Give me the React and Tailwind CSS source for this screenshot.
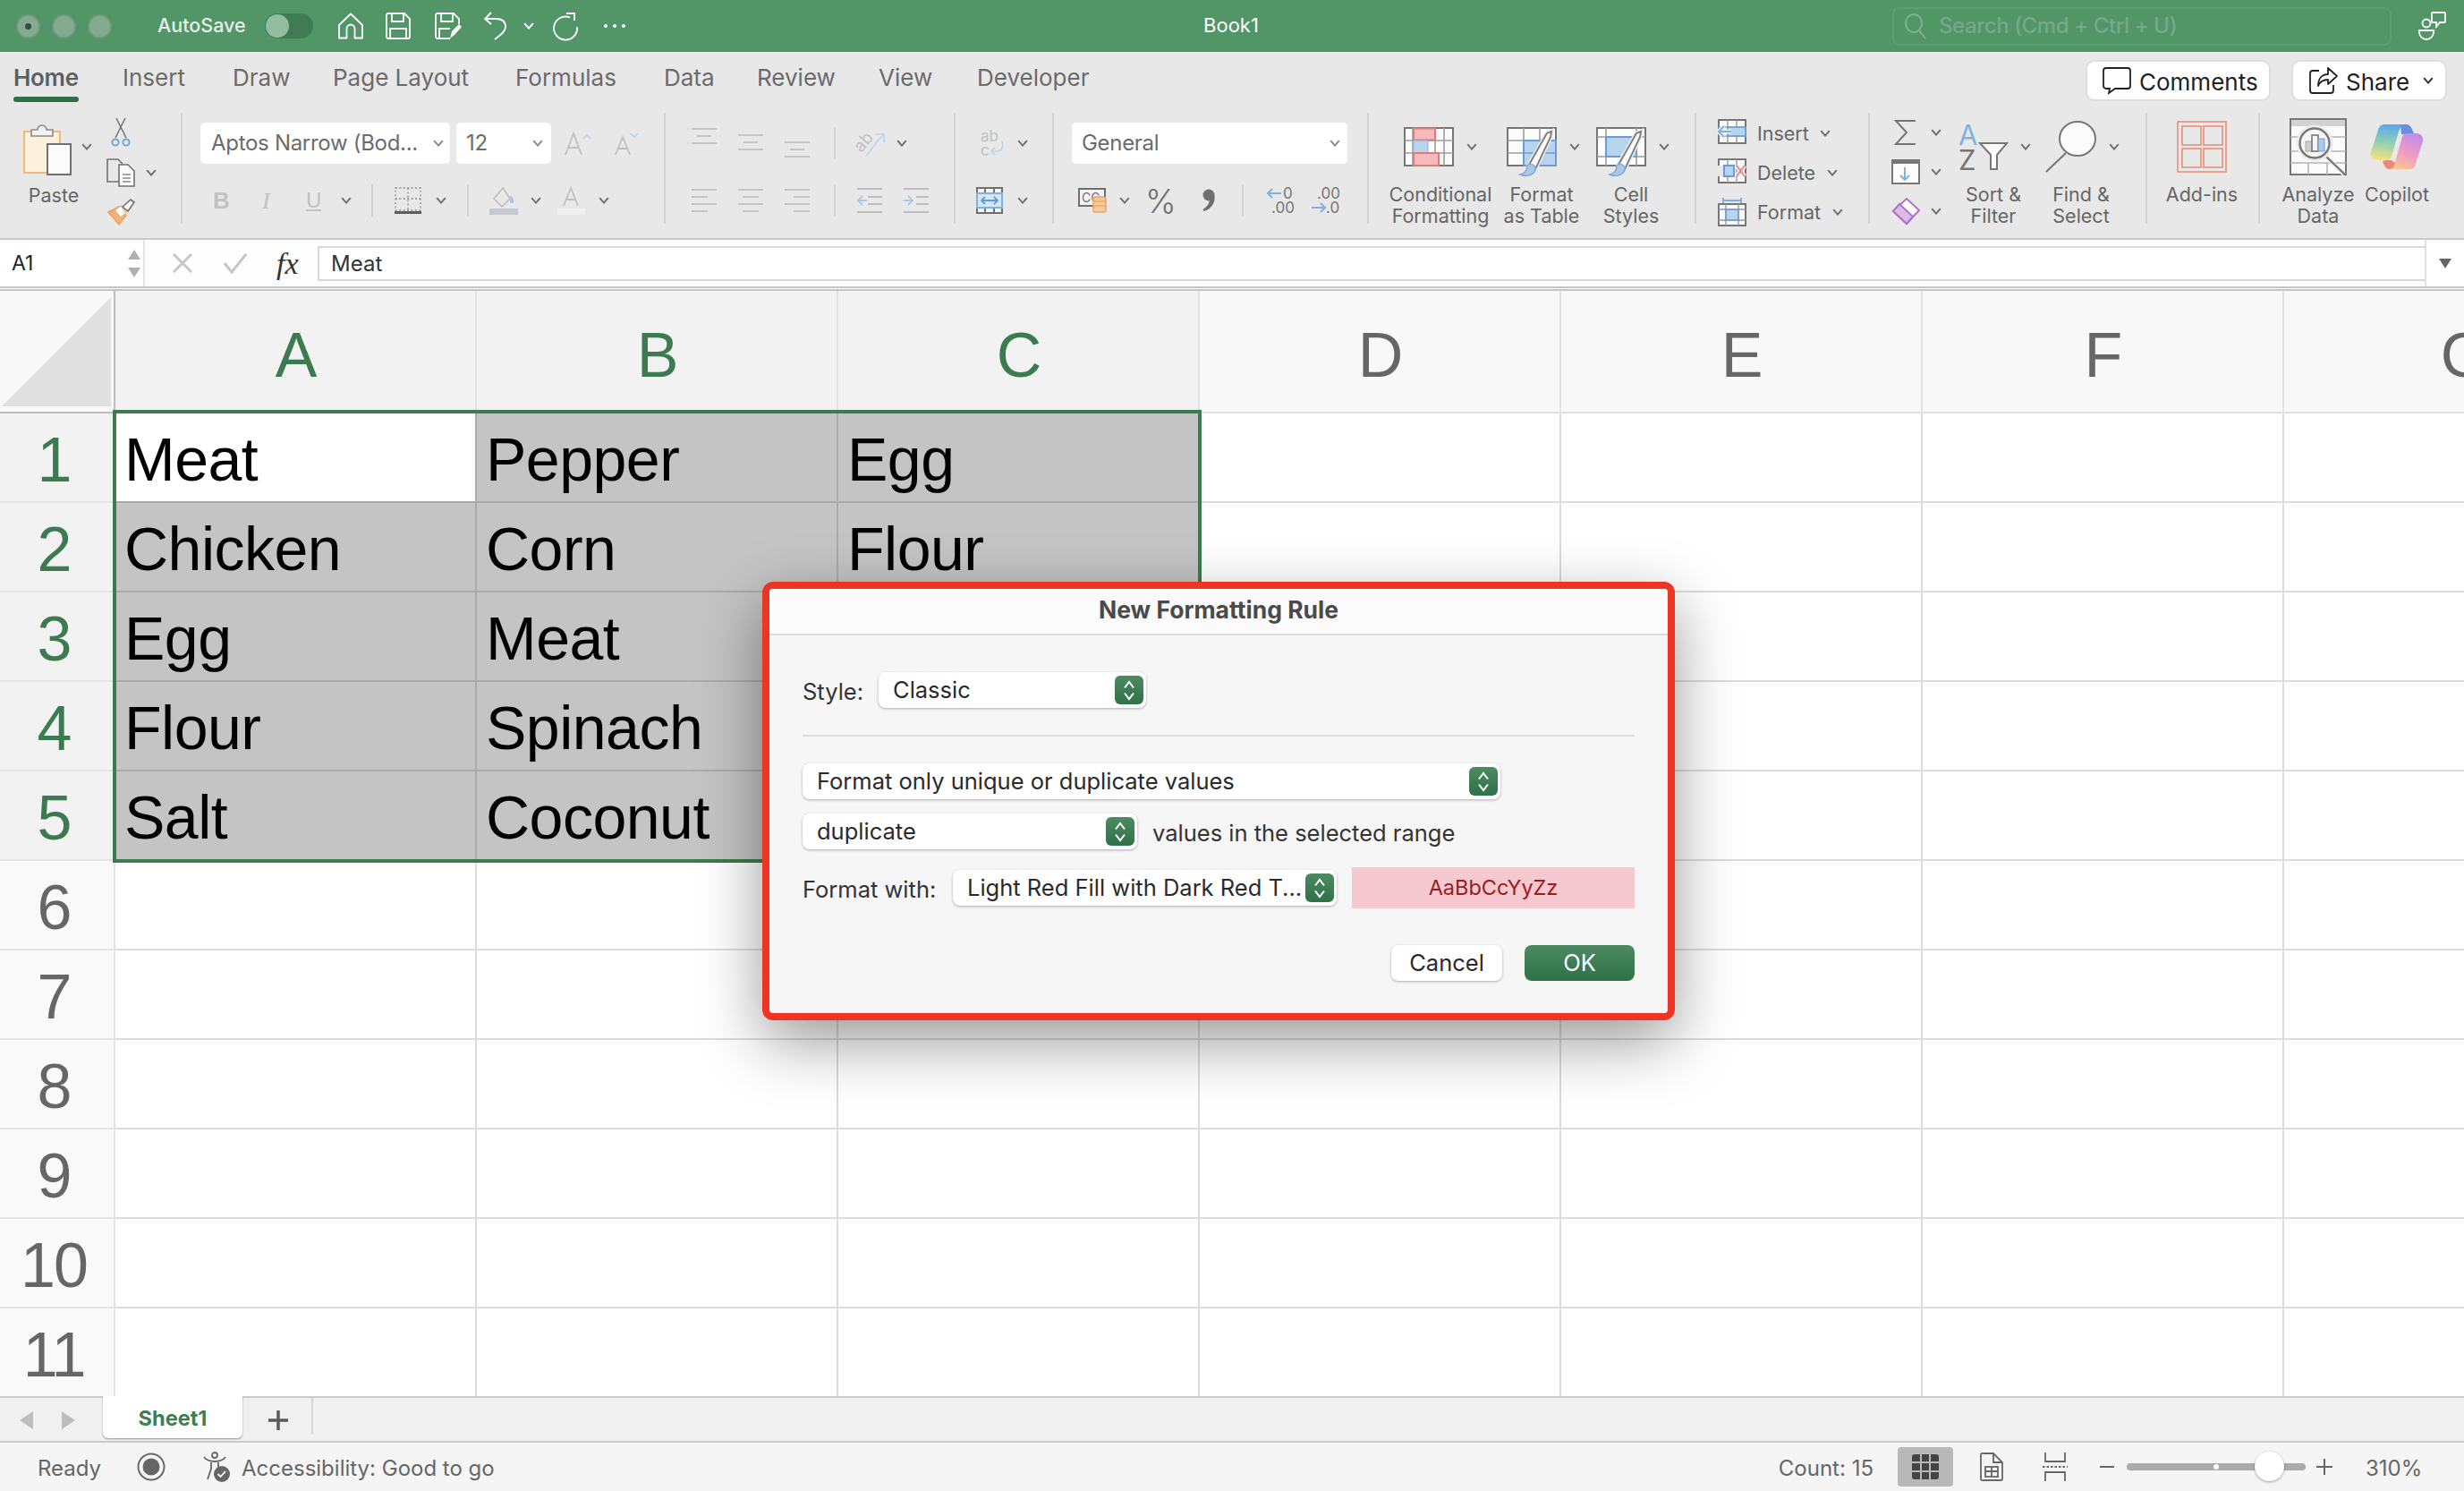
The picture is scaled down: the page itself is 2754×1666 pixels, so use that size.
import { Fragment } from "react";

const UI = "font-['Inter','Roboto',sans-serif]";
const SHEET = "font-['Liberation_Sans',Arial,sans-serif]";

const GRAY = "#767676";
const BLUE = "#7fb2e3";

const Chev = ({ className = "", color = "#707070" }) => (
  <svg width="12" height="8" viewBox="0 0 12 8" className={`shrink-0 ${className}`}>
    <path d="M1.2 1.2 6 6.6l4.8-5.4" fill="none" stroke={color} strokeWidth="2" />
  </svg>
);

const Box = ({ w, h, children, className = "" }) => (
  <svg width={w} height={h} viewBox={`0 0 ${w} ${h}`} className={`shrink-0 overflow-visible ${className}`}>
    {children}
  </svg>
);

/* ---------- title bar icons ---------- */
const HomeIcon = () => (
  <Box w={30} h={30}>
    <path d="M15 1.5 2 14v14.5h8.5V18a4.5 4.5 0 0 1 9 0v10.5H28V14z" fill="none" stroke="#fff" strokeWidth="1.8" strokeLinejoin="round" />
  </Box>
);
const SaveIcon = () => (
  <Box w={28} h={30}>
    <path d="M1 3a2 2 0 0 1 2-2h18l6 6v20a2 2 0 0 1-2 2H3a2 2 0 0 1-2-2z" fill="none" stroke="#fff" strokeWidth="1.8" />
    <path d="M7 1v9h13V1M5 29V18h18v11" fill="none" stroke="#fff" strokeWidth="1.8" />
  </Box>
);
const SaveAsIcon = () => (
  <Box w={30} h={32}>
    <path d="M17 30H3a2 2 0 0 1-2-2V4a2 2 0 0 1 2-2h18l6 6v6" fill="none" stroke="#fff" strokeWidth="1.8" />
    <path d="M7 2v9h13V2M5 30V19h12" fill="none" stroke="#fff" strokeWidth="1.8" />
    <path d="m17 30 2-8 8-8 3 3-8 9z" fill="#fff" />
  </Box>
);
const UndoIcon = () => (
  <Box w={28} h={32}>
    <path d="M9 1 2 8l7 6M2 8h12c7 0 11 3 11 9 0 5-5 9-12 14" fill="none" stroke="#fff" strokeWidth="1.8" />
  </Box>
);
const RedoIcon = () => (
  <Box w={30} h={30}>
    <path d="M20 5.5A13 13 0 1 0 28 16" fill="none" stroke="#fff" strokeWidth="1.8" />
    <path d="M16 1h9v8" fill="none" stroke="#fff" strokeWidth="1.8" />
  </Box>
);
const PeopleIcon = () => (
  <Box w={32} h={32}>
    <circle cx="10" cy="13" r="4.5" fill="none" stroke="#fff" strokeWidth="1.8" />
    <path d="M2 21h16v2a8 8 0 0 1-16 0z" fill="none" stroke="#fff" strokeWidth="1.8" />
    <path d="M17 1h13a1 1 0 0 1 1 1v9a1 1 0 0 1-1 1h-5l-4 5v-5h-4a1 1 0 0 1-1-1V2a1 1 0 0 1 1-1z" fill="none" stroke="#fff" strokeWidth="1.8" />
  </Box>
);

/* ---------- ribbon icons ---------- */
const PasteIcon = () => (
  <Box w={54} h={59}>
    <rect x="1" y="10" width="40" height="46" fill="#fdf0dc" stroke="#efb77c" strokeWidth="2" />
    <path d="M9 15V8h7a5 5 0 0 1 10 0h7v7z" fill="#f3f3f3" stroke="#8a8a8a" strokeWidth="1.6" />
    <rect x="27" y="24" width="26" height="34" fill="#fbfbfb" stroke="#707070" strokeWidth="2" />
  </Box>
);
const ScissorsIcon = () => (
  <Box w={22} h={32}>
    <path d="M5 22 16 0M17 22 6 0" stroke="#6f6f6f" strokeWidth="1.5" />
    <circle cx="5" cy="27" r="3.6" fill="none" stroke="#6fa5dc" strokeWidth="2" />
    <circle cx="17" cy="27" r="3.6" fill="none" stroke="#6fa5dc" strokeWidth="2" />
  </Box>
);
const CopyIcon = () => (
  <Box w={32} h={32}>
    <path d="M16 26H1V1h12l5 5" fill="none" stroke="#707070" strokeWidth="1.6" />
    <path d="M14 7h10l7 7v17H14z" fill="#fbfbfb" stroke="#707070" strokeWidth="1.6" />
    <path d="M18 18h9M18 22h9M18 26h9" stroke="#8a8a8a" strokeWidth="1.4" />
  </Box>
);
const PainterIcon = () => (
  <Box w={32} h={30}>
    <path d="m1 15 12-6 8 10-8 10z" fill="#f3b27a" stroke="#ef9f5e" strokeWidth="1.4" />
    <path d="m8 13 7-5 6 8-6 5z" fill="#fff" stroke="#e9a871" strokeWidth="1.2" />
    <path d="m17 9 9-8 4 3-7 10z" fill="#fafafa" stroke="#707070" strokeWidth="1.6" />
  </Box>
);
const GrowA = ({ up }) => (
  <Box w={up ? 30 : 26} h={28}>
    <path d={up ? "M1 27 10 3l9 24M5 19h10" : "M1 27 9 7l8 20M4 20h10"} fill="none" stroke="#c0c0c0" strokeWidth="1.8" />
    <path d={up ? "m21 9 4-4 4 4" : "m18 3 4 4 4-4"} fill="none" stroke="#bcd3ea" strokeWidth="1.6" />
  </Box>
);
const BorderIcon = () => (
  <Box w={30} h={30}>
    <path d="M1 1h28v25H1zM15 1v25M1 13h28" fill="none" stroke="#8a8a8a" strokeWidth="1.3" strokeDasharray="2 2.4" />
    <rect x="0" y="27" width="30" height="3" fill="#5d5d5d" />
  </Box>
);
const FillIcon = () => (
  <Box w={32} h={32}>
    <path d="m5 14 10-12 8 12-9 9z" fill="none" stroke="#bdbdbd" strokeWidth="1.6" />
    <path d="M24 10c2 3 3 5 3 7a2 2 0 0 1-4 0z" fill="#a8bfd8" />
    <rect x="0" y="25" width="32" height="7" fill="#c2c9d3" />
  </Box>
);
const ColorA = () => (
  <Box w={31} h={32}>
    <path d="M7 22 15 2l8 20M10 15h10" fill="none" stroke="#c0c0c0" strokeWidth="1.8" />
    <rect x="0" y="25" width="31" height="7" fill="#f0f0f0" />
  </Box>
);
const AlignV = ({ y }) => (
  <Box w={28} h={36}>
    <path d={`M0 ${y + 1}h28M6 ${y + 9}h16M0 ${y + 17}h28`} stroke="#c4c4c4" strokeWidth="2" />
  </Box>
);
const AlignH = ({ kind }) => {
  const d = {
    l: "M0 2h28M0 10h18M0 18h28M0 26h18",
    c: "M0 2h28M5 10h18M0 18h28M5 26h18",
    r: "M0 2h28M10 10h18M0 18h28M10 26h18",
  }[kind];
  return (
    <Box w={28} h={28}>
      <path d={d} stroke="#c4c4c4" strokeWidth="2" />
    </Box>
  );
};
const OrientIcon = () => (
  <Box w={34} h={30}>
    <text x="0" y="20" transform="rotate(-50 10 16)" fontSize="19" fill="#c0c0c0" fontFamily="Inter">ab</text>
    <path d="M12 29 32 4M23 5h9v9" fill="none" stroke="#bcd3ea" strokeWidth="1.6" />
  </Box>
);
const Indent = ({ dir }) => (
  <Box w={28} h={28}>
    <path d={dir === "l" ? "M0 1h28M12 10h16M12 18h16M0 27h28" : "M0 1h28M14 10h14M14 18h14M0 27h28"} stroke="#bcbcbc" strokeWidth="2" />
    <path d={dir === "l" ? "M11 14H1M6 9l-5 5 5 5" : "M0 14h10M5 9l5 5-5 5"} fill="none" stroke="#a9c8e6" strokeWidth="1.8" />
  </Box>
);
const WrapIcon = () => (
  <Box w={28} h={30}>
    <text x="0" y="13" fontSize="17" fill="#c0c0c0" fontFamily="Inter">ab</text>
    <text x="0" y="29" fontSize="17" fill="#c0c0c0" fontFamily="Inter">c</text>
    <path d="M24 13c2 6 0 10-5 11h-7M16 20l-4 4 4 4" fill="none" stroke="#bcd3ea" strokeWidth="1.6" />
  </Box>
);
const MergeIcon = () => (
  <Box w={30} h={30}>
    <rect x="1" y="1" width="28" height="28" fill="#f7f7f7" stroke="#6f6f6f" strokeWidth="2" />
    <path d="M10 1v6M20 1v6M10 23v6M20 23v6" stroke="#6f6f6f" strokeWidth="2" />
    <rect x="1" y="7" width="28" height="16" fill="#d6e6f6" stroke="#7fb2e3" strokeWidth="2" />
    <path d="M6 15h18M10 11l-4 4 4 4M20 11l4 4-4 4" fill="none" stroke="#5f9bd8" strokeWidth="1.8" />
  </Box>
);
const CurrencyIcon = () => (
  <Box w={32} h={28}>
    <rect x="1" y="1" width="29" height="19" fill="#f4f4f4" stroke="#6f6f6f" strokeWidth="2" />
    <text x="4" y="16" fontSize="14" fill="#6f6f6f" fontFamily="Inter">CC</text>
    <rect x="17" y="10" width="14" height="6" rx="3" fill="#f8c99b" stroke="#eba766" strokeWidth="1.5" />
    <rect x="17" y="15" width="14" height="6" fill="#f8c99b" stroke="#eba766" strokeWidth="1.5" />
    <rect x="17" y="20" width="14" height="7" rx="2" fill="#f8c99b" stroke="#eba766" strokeWidth="1.5" />
  </Box>
);
const CommaIcon = () => (
  <Box w={17} h={26}>
    <circle cx="10" cy="7" r="6.5" fill="#6f6f6f" />
    <path d="M11 8h5.500c1 8-4 15-12 17l-1-2c5-3 7-7 7.500-11z" fill="#6f6f6f" />
  </Box>
);
const DecIcon = ({ more }) => (
  <Box w={31} h={32}>
    {more ? (
      <>
        <path d="M17 8H2M7 3 2 8l5 5" fill="none" stroke={BLUE} strokeWidth="2" />
        <text x="19" y="14" fontSize="17" fill={GRAY} fontFamily="Inter">0</text>
        <text x="6" y="30" fontSize="17" fill={GRAY} fontFamily="Inter">.00</text>
      </>
    ) : (
      <>
        <text x="6" y="14" fontSize="17" fill={GRAY} fontFamily="Inter">.00</text>
        <path d="M0 24h15M10 19l5 5-5 5" fill="none" stroke={BLUE} strokeWidth="2" />
        <text x="16" y="30" fontSize="17" fill={GRAY} fontFamily="Inter">.0</text>
      </>
    )}
  </Box>
);
const Brush = () => (
  <g>
    <path d="M25 42 45 7l5-2-1 6-17 36z" fill="#fff" stroke="#e8e8e8" strokeWidth="5" />
    <path d="M25 42 45 7l5-2-1 6-17 36z" fill="#fafafa" stroke="#7c7c7c" strokeWidth="1.8" />
    <path d="M15 53c5-1 8-4 8-10 2-3 7-2 9 2 1 7-8 12-17 8z" fill="#a9c8ea" stroke="#7fa8d8" strokeWidth="1.4" />
  </g>
);
const CondIcon = () => (
  <Box w={56} h={44}>
    <rect x="1" y="1" width="54" height="42" fill="#fcfcfc" stroke={GRAY} strokeWidth="2" />
    <path d="M10 1v42M35 1v42M45 1v42M1 15h54M1 29h54" stroke="#9c9c9c" strokeWidth="1.6" />
    <rect x="11" y="1.5" width="24" height="13" fill="#f5babd" stroke="#dd7c75" strokeWidth="2" />
    <rect x="11" y="15" width="16" height="14" fill="#b7d4ef" stroke="#8db3dd" strokeWidth="1" />
    <rect x="11" y="29" width="28" height="14" fill="#f5babd" stroke="#dd7c75" strokeWidth="2" />
  </Box>
);
const TableIcon = () => (
  <Box w={60} h={55}>
    <rect x="1" y="1" width="54" height="42" fill="#fcfcfc" stroke={GRAY} strokeWidth="2" />
    <path d="M19 1v15M37 1v15M1 15h18M1 29h18" stroke="#9c9c9c" strokeWidth="1.6" />
    <rect x="19" y="15" width="36" height="28" fill="#b7d4ef" stroke="#6f9bd1" strokeWidth="2" />
    <path d="M37 15v28M19 29h36" stroke="#6f9bd1" strokeWidth="1.6" />
    <Brush />
  </Box>
);
const StylesIcon = () => (
  <Box w={60} h={55}>
    <rect x="1" y="1" width="54" height="42" fill="#fcfcfc" stroke={GRAY} strokeWidth="2" />
    <path d="M11 1v42M45 1v42M1 11h54M1 33h54" stroke="#9c9c9c" strokeWidth="1.6" />
    <rect x="11" y="11" width="34" height="22" fill="#b7d4ef" stroke="#6f9bd1" strokeWidth="2" />
    <Brush />
  </Box>
);
const CellIcon = ({ kind }) => (
  <Box w={32} h={32}>
    {kind === "insert" && (
      <>
        <rect x="1" y="1" width="30" height="26" fill="#fafafa" stroke={GRAY} strokeWidth="2" />
        <path d="M11 1v26M21 1v26M1 9h30M1 19h30" stroke="#9a9a9a" strokeWidth="1.4" />
        <rect x="11" y="9" width="20" height="10" fill="#b7d4ef" stroke="#6f9bd1" strokeWidth="1.6" />
        <path d="M15 14H1M7 8l-6 6 6 6" fill="none" stroke="#eee" strokeWidth="5" />
        <path d="M15 14H1M7 8l-6 6 6 6" fill="none" stroke={BLUE} strokeWidth="2" />
      </>
    )}
    {kind === "delete" && (
      <>
        <rect x="1" y="1" width="30" height="26" fill="#fafafa" stroke={GRAY} strokeWidth="2" />
        <path d="M11 1v26M21 1v26" stroke="#9a9a9a" strokeWidth="1.4" />
        <rect x="0" y="8" width="7" height="12" fill="#e8e8e8" />
        <rect x="7" y="8" width="11" height="12" fill="#b7d4ef" stroke="#6f9bd1" strokeWidth="2" />
        <path d="m21 8 9 12M30 8l-9 12" stroke="#eee" strokeWidth="5" />
        <path d="m21 8 9 12M30 8l-9 12" stroke="#ea8a84" strokeWidth="2" />
      </>
    )}
    {kind === "format" && (
      <>
        <path d="M6 3h20M6 0v6M26 0v6" stroke={BLUE} strokeWidth="2" />
        <rect x="1" y="7" width="30" height="24" fill="#fafafa" stroke={GRAY} strokeWidth="2" />
        <path d="M9 7v24M23 7v24M1 13h30M1 25h30" stroke="#9a9a9a" strokeWidth="1.4" />
        <rect x="9" y="13" width="14" height="12" fill="#b7d4ef" stroke="#6f9bd1" strokeWidth="1.6" />
      </>
    )}
  </Box>
);
const SigmaIcon = () => (
  <Box w={32} h={28}>
    <path d="M27 1H5l12 13L5 27h22" fill="none" stroke={GRAY} strokeWidth="2" />
  </Box>
);
const FillDown = () => (
  <Box w={32} h={28}>
    <rect x="1" y="1" width="30" height="26" fill="#fcfcfc" stroke={GRAY} strokeWidth="2" />
    <rect x="1" y="1" width="30" height="4" fill={GRAY} />
    <path d="M15 9v14M10 18l5 5 5-5" fill="none" stroke={BLUE} strokeWidth="2" />
  </Box>
);
const EraserIcon = () => (
  <Box w={32} h={30}>
    <path d="m17 1 14 13-14 15L2 15z" fill="#fff" stroke="#ad73c4" strokeWidth="2" />
    <path d="m9 7-7 8 15 14 7-8z" fill="#dcb9e6" stroke="#ad73c4" strokeWidth="2" />
  </Box>
);
const SortIcon = () => (
  <Box w={55} h={54}>
    <text x="0" y="25" fontSize="31" fill={BLUE} fontFamily="Inter">A</text>
    <text x="0" y="53" fontSize="31" fill={GRAY} fontFamily="Inter">Z</text>
    <path d="M24 23h30L43 36v16h-7V36z" fill="#fbfbfb" stroke={GRAY} strokeWidth="2" />
  </Box>
);
const FindIcon = () => (
  <Box w={58} h={58}>
    <ellipse cx="36" cy="20" rx="20" ry="19" fill="#fbfbfb" stroke={GRAY} strokeWidth="2" />
    <path d="M23 36 1 57" stroke={GRAY} strokeWidth="2" />
  </Box>
);
const AddinsIcon = () => (
  <Box w={56} h={58}>
    <rect x="1" y="1" width="54" height="56" fill="none" stroke="#e58f78" strokeWidth="1.6" />
    <rect x="6" y="6" width="21" height="21" fill="none" stroke="#e58f78" strokeWidth="1.6" />
    <rect x="30" y="6" width="21" height="21" fill="none" stroke="#e58f78" strokeWidth="1.6" />
    <rect x="6" y="31" width="21" height="21" fill="none" stroke="#e58f78" strokeWidth="1.6" />
    <rect x="30" y="31" width="21" height="21" fill="none" stroke="#e58f78" strokeWidth="1.6" />
  </Box>
);
const AnalyzeIcon = () => (
  <Box w={64} h={64}>
    <rect x="1" y="1" width="62" height="62" fill="#fbfbfb" stroke={GRAY} strokeWidth="2" />
    <rect x="2" y="2" width="60" height="7" fill="#d2d2d2" />
    <path d="M1 21h62M1 37h62M1 50h62M21 50v13M42 50v13" stroke="#b5b5b5" strokeWidth="1.6" />
    <path d="m38 40 23 23" stroke="#eee" strokeWidth="5" />
    <path d="m40 42 22 21" stroke={GRAY} strokeWidth="2.4" />
    <circle cx="28" cy="28" r="18" fill="#f6f6f6" stroke="#ececec" strokeWidth="5" />
    <circle cx="28" cy="28" r="16.5" fill="none" stroke={GRAY} strokeWidth="2.4" />
    <rect x="18" y="26" width="8" height="11" fill="#cfcfcf" stroke="#a5a5a5" />
    <rect x="25" y="19" width="7" height="18" fill="#f3f3f3" stroke={GRAY} strokeWidth="1.6" />
    <rect x="32" y="23" width="7" height="14" fill="#a9cbec" stroke="#6f9bd1" />
  </Box>
);
const CopilotIcon = () => (
  <Box w={60} h={52}>
    <defs>
      <linearGradient id="cpa" x1="0.4" y1="0" x2="0.3" y2="1">
        <stop offset="0" stopColor="#5aa9ef" />
        <stop offset="0.5" stopColor="#8fd0b0" />
        <stop offset="1" stopColor="#f8e27e" />
      </linearGradient>
      <linearGradient id="cpb" x1="0.7" y1="0" x2="0.3" y2="1">
        <stop offset="0" stopColor="#c28de8" />
        <stop offset="0.55" stopColor="#ef9cc2" />
        <stop offset="1" stopColor="#fbc58f" />
      </linearGradient>
    </defs>
    <path d="M16 1h24c-3 0-6 3-8 8l-8 28c-1 3-3 4-6 4H8c-5 0-8-4-7-9l8-25c1-4 4-6 7-6z" fill="url(#cpa)" />
    <path d="M34 1h6c4 0 6 2 8 8l2 3H35z" fill="#6a8fe0" />
    <path d="M44 51H20c3 0 6-3 8-8l8-28c1-3 3-4 6-4h10c5 0 8 4 7 9l-8 25c-1 4-4 6-7 6z" fill="url(#cpb)" />
    <path d="M18 41h6l4 3c-1 4-3 7-7 7-3 0-5-3-7-9z" fill="#ea8b7e" />
  </Box>
);
const CommentIcon = () => (
  <Box w={32} h={30}>
    <path d="M4 1h24a3 3 0 0 1 3 3v17a3 3 0 0 1-3 3H14l-7 5 1-5H4a3 3 0 0 1-3-3V4a3 3 0 0 1 3-3z" fill="none" stroke="#222" strokeWidth="1.8" />
  </Box>
);
const ShareIcon = () => (
  <Box w={32} h={30}>
    <path d="M11 4H4a3 3 0 0 0-3 3v19a3 3 0 0 0 3 3h20a3 3 0 0 0 3-3v-6" fill="none" stroke="#222" strokeWidth="1.8" />
    <path d="M21 1l10 9-10 9v-5c-6 0-9 2-11 7 0-8 4-13 11-13z" fill="none" stroke="#222" strokeWidth="1.8" strokeLinejoin="round" />
  </Box>
);

const Sep = ({ className = "" }) => <div className={`w-[2px] h-[124px] bg-[#d2d2d2] shrink-0 ${className}`} />;
const MiniSep = ({ className = "" }) => <div className={`w-[2px] h-[36px] bg-[#d2d2d2] shrink-0 ${className}`} />;
const Row1 = ({ children }) => <div className="flex items-center h-[46px]">{children}</div>;
const Row2 = ({ children }) => <div className="flex items-center h-[36px] mt-[23px]">{children}</div>;

const Dropdown = ({ text, className, chevClass }) => (
  <div className={`h-[46px] bg-white rounded-[5px] flex items-center justify-between text-[24px] text-[#6b6b6b] tracking-[-0.3px] ${className}`}>
    <span className="whitespace-nowrap">{text}</span>
    <Chev className={chevClass} color="#8a8a8a" />
  </div>
);

const BigItem = ({ className, iconClass = "", icon, chevClass, label }) => (
  <div className={`shrink-0 flex flex-col ${className}`}>
    <div className={`h-[76px] flex items-center ${iconClass}`}>
      {icon}
      {chevClass && <Chev className={chevClass} />}
    </div>
    <div className="mt-[3px] text-center text-[21.5px] leading-[24px] text-[#666] whitespace-nowrap">{label}</div>
  </div>
);

const CellRow = ({ kind, label, textClass }) => (
  <div className="h-[44px] flex items-center">
    <div className="ml-[24px]">
      <CellIcon kind={kind} />
    </div>
    <span className={`ml-[12px] text-[21.5px] text-[#666] ${textClass}`}>{label}</span>
    <Chev />
  </div>
);

const TABS = [
  ["Home", "w-[122px]"],
  ["Insert", "w-[123px]"],
  ["Draw", "w-[112px]"],
  ["Page Layout", "w-[204px]"],
  ["Formulas", "w-[166px]"],
  ["Data", "w-[104px]"],
  ["Review", "w-[136px]"],
  ["View", "w-[110px]"],
  ["Developer", "w-[150px]"],
];

const TitleBar = () => (
  <div className="h-[58px] bg-[#529567] flex items-center text-white">
    <div className="ml-[18px] w-[27px] h-[27px] rounded-full bg-[#84ab90] border-2 border-[#6f9a7e] flex items-center justify-center">
      <div className="w-[7px] h-[7px] rounded-full bg-[#2f4f3a]" />
    </div>
    <div className="ml-[13px] w-[27px] h-[27px] rounded-full bg-[#84ab90] border-2 border-[#6f9a7e]" />
    <div className="ml-[13px] w-[27px] h-[27px] rounded-full bg-[#84ab90] border-2 border-[#6f9a7e]" />
    <span className="ml-[51px] mb-[2px] w-[120px] text-[21.5px] text-[#e6f0e9] font-medium">AutoSave</span>
    <div className="w-[54px] h-[28px] rounded-full bg-[#3f7c54] flex items-center pl-[1px]">
      <div className="w-[26px] h-[26px] rounded-full bg-[#93bd9f]" />
    </div>
    <div className="ml-[27px]"><HomeIcon /></div>
    <div className="ml-[24px]"><SaveIcon /></div>
    <div className="ml-[27px]"><SaveAsIcon /></div>
    <div className="ml-[24px]"><UndoIcon /></div>
    <Chev className="ml-[17px]" color="#fff" />
    <div className="ml-[20px]"><RedoIcon /></div>
    <div className="ml-[28px] flex gap-[6px]">
      <div className="w-[4px] h-[4px] rounded-full bg-white" />
      <div className="w-[4px] h-[4px] rounded-full bg-white" />
      <div className="w-[4px] h-[4px] rounded-full bg-white" />
    </div>
    <div className="ml-[622px] mb-[2px] w-[110px] text-center text-[22px]">Book1</div>
    <div className="ml-[684px] w-[558px] h-[43px] rounded-[8px] border-2 border-[#5c9d73] flex items-center pl-[11px]">
      <svg width="26" height="30" viewBox="0 0 26 30" className="shrink-0">
        <ellipse cx="11" cy="12" rx="9" ry="10" fill="none" stroke="#7db08f" strokeWidth="2" />
        <path d="m17 20 7 9" stroke="#7db08f" strokeWidth="2" />
      </svg>
      <span className="ml-[13px] mb-[1px] text-[24px] font-medium text-[#74aa87] tracking-[-0.4px] whitespace-nowrap">Search (Cmd + Ctrl + U)</span>
    </div>
    <div className="ml-[29px]"><PeopleIcon /></div>
  </div>
);

const Ribbon = () => (
  <div className="h-[208px] bg-[#e8e8e8] border-b-0">
    <div className="h-[68px] flex">
      <div className="flex pl-[15px] pt-[14px]">
        {TABS.map(([name, w], i) => (
          <div key={name} className={`${w} text-[26px] leading-[30px] whitespace-nowrap ${i === 0 ? "text-[#5e5e5e] font-semibold tracking-[-0.3px]" : "text-[#6b6b6b]"}`}>
            <span className="inline-block">
              {name}
              {i === 0 && <div className="mt-[6px] h-[6px] rounded-full bg-[#2f6e46]" />}
            </span>
          </div>
        ))}
      </div>
      <div className="ml-auto mt-[9px] mr-[19px] flex gap-[23px]">
        <div className="w-[207px] h-[46px] bg-white rounded-[10px] border-2 border-[#dedede] flex items-center pl-[17px] text-[26px] text-[#222]">
          <CommentIcon />
          <span className="ml-[9px] mt-[2px]">Comments</span>
        </div>
        <div className="w-[174px] h-[46px] bg-white rounded-[10px] border-2 border-[#dedede] flex items-center pl-[18px] text-[26px] text-[#222]">
          <ShareIcon />
          <span className="ml-[9px] mt-[2px]">Share</span>
          <Chev className="ml-[15px]" color="#333" />
        </div>
      </div>
    </div>

    <div className="h-[140px] flex">
      {/* clipboard */}
      <div className="w-[202px] shrink-0 flex">
        <div className="ml-[26px] w-[71px] shrink-0 flex flex-col">
          <div className="mt-[11px] flex items-center">
            <PasteIcon />
            <Chev className="ml-[11px] mb-[6px]" />
          </div>
          <div className="w-[68px] mt-[10px] text-center text-[21.5px] leading-[24px] text-[#666]">Paste</div>
        </div>
        <div className="ml-[22px] flex flex-col">
          <div className="mt-[6px] ml-[5px]"><ScissorsIcon /></div>
          <div className="mt-[13px] flex items-center">
            <CopyIcon />
            <Chev className="ml-[12px]" />
          </div>
          <div className="mt-[13px] ml-[1px]"><PainterIcon /></div>
        </div>
      </div>
      <Sep />

      {/* font */}
      <div className="w-[538px] shrink-0 pt-[11px]">
        <Row1>
          <Dropdown text="Aptos Narrow (Bod..." className="ml-[20px] w-[279px] pl-[12px] pr-[7px] shrink-0" />
          <Dropdown text="12" className="ml-[7px] w-[106px] pl-[11px] pr-[9px] shrink-0" />
          <div className="ml-[15px]"><GrowA up /></div>
          <div className="ml-[26px]"><GrowA /></div>
        </Row1>
        <Row2>
          <span className={`ml-[34px] w-[17px] text-[26px] font-bold text-[#c2c2c2] ${SHEET}`}>B</span>
          <span className="ml-[38px] w-[12px] text-[26px] italic text-[#c2c2c2] font-['Liberation_Serif',serif]">I</span>
          <span className={`ml-[37px] w-[16px] text-[24px] underline text-[#c2c2c2] ${SHEET}`}>U</span>
          <Chev className="ml-[23px]" />
          <MiniSep className="ml-[22px]" />
          <div className="ml-[24px]"><BorderIcon /></div>
          <Chev className="ml-[16px]" />
          <MiniSep className="ml-[23px]" />
          <div className="ml-[23px]"><FillIcon /></div>
          <Chev className="ml-[14px]" />
          <div className="ml-[18px]"><ColorA /></div>
          <Chev className="ml-[15px]" />
        </Row2>
      </div>
      <Sep />

      {/* alignment */}
      <div className="w-[322px] shrink-0 pt-[11px]">
        <Row1>
          <div className="ml-[29px]"><AlignV y={1} /></div>
          <div className="ml-[24px]"><AlignV y={8} /></div>
          <div className="ml-[24px]"><AlignV y={16} /></div>
          <MiniSep className="ml-[27px]" />
          <div className="ml-[22px]"><OrientIcon /></div>
          <Chev className="ml-[12px]" />
        </Row1>
        <Row2>
          <div className="ml-[29px]"><AlignH kind="l" /></div>
          <div className="ml-[24px]"><AlignH kind="c" /></div>
          <div className="ml-[24px]"><AlignH kind="r" /></div>
          <MiniSep className="ml-[27px]" />
          <div className="ml-[24px]"><Indent dir="l" /></div>
          <div className="ml-[24px]"><Indent dir="r" /></div>
        </Row2>
      </div>
      <Sep />

      {/* wrap + merge */}
      <div className="w-[108px] shrink-0 pt-[11px]">
        <Row1>
          <div className="ml-[28px]"><WrapIcon /></div>
          <Chev className="ml-[13px]" />
        </Row1>
        <Row2>
          <div className="ml-[23px]"><MergeIcon /></div>
          <Chev className="ml-[16px]" />
        </Row2>
      </div>
      <Sep />

      {/* number */}
      <div className="w-[350px] shrink-0 pt-[11px]">
        <Row1>
          <Dropdown text="General" className="ml-[20px] w-[308px] pl-[11px] pr-[8px] shrink-0" />
        </Row1>
        <Row2>
          <div className="ml-[27px]"><CurrencyIcon /></div>
          <Chev className="ml-[14px]" />
          <span className="ml-[17px] w-[36px] text-[37px] leading-none font-light text-[#6f6f6f]">%</span>
          <div className="ml-[25px]"><CommaIcon /></div>
          <MiniSep className="ml-[30px]" />
          <div className="ml-[25px]"><DecIcon more /></div>
          <div className="ml-[20px]"><DecIcon /></div>
        </Row2>
      </div>
      <Sep />

      {/* styles */}
      <div className="w-[364px] shrink-0 flex">
        <BigItem className="ml-[15px] w-[130px]" iconClass="pl-[24px]" icon={<CondIcon />} chevClass="ml-[14px]" label={<>Conditional<br />Formatting</>} />
        <BigItem className="w-[96px]" iconClass="pl-[9px] pt-[10px]" icon={<TableIcon />} chevClass="ml-[10px] mb-[10px]" label={<>Format<br />as Table</>} />
        <BigItem className="ml-[4px] w-[96px]" iconClass="pl-[9px] pt-[10px]" icon={<StylesIcon />} chevClass="ml-[10px] mb-[10px]" label={<>Cell<br />Styles</>} />
      </div>
      <Sep />

      {/* cells */}
      <div className="w-[192px] shrink-0 pt-[1px]">
        <CellRow kind="insert" label="Insert" textClass="w-[70px]" />
        <CellRow kind="delete" label="Delete" textClass="w-[78px]" />
        <CellRow kind="format" label="Format" textClass="w-[84px]" />
      </div>
      <Sep />

      {/* editing */}
      <div className="w-[308px] shrink-0 flex">
        <div className="shrink-0">
          {[<SigmaIcon key="s" />, <FillDown key="f" />, <EraserIcon key="e" />].map((icon) => (
            <div key={icon.key} className="h-[44px] ml-[24px] flex items-center">
              {icon}
              <Chev className="ml-[12px]" />
            </div>
          ))}
        </div>
        <BigItem className="ml-[8px] w-[100px]" iconClass="pl-[11px]" icon={<SortIcon />} chevClass="ml-[14px]" label={<>Sort &amp;<br />Filter</>} />
        <BigItem className="w-[96px]" iconClass="pl-[8px]" icon={<FindIcon />} chevClass="ml-[13px]" label={<>Find &amp;<br />Select</>} />
      </div>
      <Sep />

      {/* add-ins */}
      <div className="w-[124px] shrink-0 flex">
        <BigItem className="w-[122px]" iconClass="justify-center" icon={<AddinsIcon />} label="Add-ins" />
      </div>
      <Sep />

      {/* analyze + copilot */}
      <div className="flex">
        <BigItem className="ml-[15px] w-[100px]" iconClass="justify-center" icon={<AnalyzeIcon />} label={<>Analyze<br />Data</>} />
        <BigItem className="w-[76px]" iconClass="justify-center" icon={<CopilotIcon />} label="Copilot" />
      </div>
    </div>
  </div>
);

const FormulaBar = () => (
  <>
    <div className="h-[2px] bg-[#c8c8c8]" />
    <div className="h-[52px] bg-[#fdfdfd] flex items-center">
      <div className="w-[162px] h-full shrink-0 bg-white border-r-2 border-[#e4e4e4] flex items-center pl-[13px] pr-[3px] justify-between">
        <span className="text-[23px] text-[#222]">A1</span>
        <div className="flex flex-col gap-[9px]">
          <div className="w-0 h-0 border-x-[7px] border-x-transparent border-b-[11px] border-b-[#b0b0b0]" />
          <div className="w-0 h-0 border-x-[7px] border-x-transparent border-t-[11px] border-t-[#b0b0b0]" />
        </div>
      </div>
      <svg width="24" height="24" viewBox="0 0 24 24" className="ml-[30px] shrink-0">
        <path d="m2 2 20 20M22 2 2 22" stroke="#c6c6c6" strokeWidth="3" />
      </svg>
      <svg width="28" height="24" viewBox="0 0 28 24" className="ml-[33px] shrink-0">
        <path d="m2 12 8 10L26 2" fill="none" stroke="#c6c6c6" strokeWidth="3" />
      </svg>
      <span className="ml-[32px] w-[46px] shrink-0 text-[34px] italic text-[#333] font-['Liberation_Serif',serif]">fx</span>
      <div className="w-[2355px] shrink-0 h-[39px] self-center bg-white border-y-2 border-l-2 border-[#d8d8d8] flex items-center pl-[13px] pt-[2px] text-[24px] text-[#333]">Meat</div>
      <div className="flex-1 h-full bg-white border-l-2 border-[#e0e0e0] flex items-center justify-center">
        <div className="w-0 h-0 border-x-[7px] border-x-transparent border-t-[11px] border-t-[#666]" />
      </div>
    </div>
    <div className="h-[5px] bg-white border-y-2 border-[#c4c4c4]" />
  </>
);

const COLS = ["A", "B", "C", "D", "E", "F", "G"];
const DATA = [
  ["Meat", "Pepper", "Egg"],
  ["Chicken", "Corn", "Flour"],
  ["Egg", "Meat", ""],
  ["Flour", "Spinach", ""],
  ["Salt", "Coconut", ""],
];
const ROWS = [1, 2, 3, 4, 5, 6, 7, 8, 9, 10, 11];

const Sheet = () => (
  <div className={`relative h-[1235px] overflow-hidden bg-white ${SHEET}`}>
    <div className="grid grid-cols-[129px_repeat(7,404px)] grid-rows-[137px_repeat(11,100px)]">
      <div className="bg-[#f8f8f8] border-r-2 border-b-2 border-[#bdbdbd] flex items-end justify-end pr-[3px] pb-[6px]">
        <svg width="122" height="122" viewBox="0 0 122 122">
          <path d="M0 122 122 0v122z" fill="#e0e0e0" />
        </svg>
      </div>
      {COLS.map((c, i) => (
        <div
          key={c}
          className={`border-r-2 border-b-2 border-[#e2e2e2] flex items-center justify-center text-[70px] tracking-[-2px] pt-[9px] ${
            i < 3 ? "bg-[#f2f2f2] text-[#3c7a50]" : "bg-[#f8f8f8] text-[#666]"
          }`}
        >
          {c}
        </div>
      ))}
      {ROWS.map((r) => (
        <Fragment key={r}>
          <div
            className={`border-r-2 border-b-2 border-[#e4e4e4] flex items-center justify-center text-[70px] tracking-[-2px] pt-[6px] pr-[7px] ${
              r <= 5 ? "bg-[#f2f2f2] text-[#3c7a50]" : "bg-[#f9f9f9] text-[#666]"
            }`}
          >
            {r}
          </div>
          {COLS.map((c, ci) => {
            const sel = r <= 5 && ci < 3;
            const active = r === 1 && ci === 0;
            return (
              <div
                key={c}
                className={`border-r-2 border-b-2 flex items-center pl-[10px] pt-[4px] text-[68px] tracking-[-0.5px] text-black whitespace-nowrap ${
                  sel ? "border-[#aaaaaa]" : "border-[#dcdcdc]"
                } ${sel && !active ? "bg-[#c4c4c4]" : "bg-white"}`}
              >
                {sel ? DATA[r - 1][ci] : ""}
              </div>
            );
          })}
        </Fragment>
      ))}
    </div>
    {/* selection outline */}
    <div className="absolute left-[126px] top-[133px] w-[1217px] h-[506px] border-4 border-[#3c7a50]" />
  </div>
);

const Stepper = () => (
  <div className="w-[32px] h-[32px] rounded-[6px] bg-gradient-to-b from-[#4c8a62] to-[#2f7148] flex flex-col items-center justify-center gap-[3px] shrink-0">
    <svg width="14" height="10" viewBox="0 0 14 10"><path d="M2 8.500 7 2l5 6.500" fill="none" stroke="#fff" strokeWidth="2" /></svg>
    <svg width="14" height="10" viewBox="0 0 14 10"><path d="M2 1.500 7 8l5-6.500" fill="none" stroke="#fff" strokeWidth="2" /></svg>
  </div>
);

const Select = ({ text, className }) => (
  <div className={`h-[40px] bg-white rounded-[8px] shadow-[0_1px_3px_rgba(0,0,0,0.3)] flex items-center justify-between pl-[16px] pr-[3px] shrink-0 ${className}`}>
    <span className="whitespace-nowrap">{text}</span>
    <Stepper />
  </div>
);

const Dialog = () => (
  <div className={`absolute left-[852px] top-[650px] w-[1020px] h-[490px] rounded-[12px] border-8 border-[#ee3524] bg-[#f6f6f6] shadow-[0_24px_70px_rgba(0,0,0,0.4)] text-[25.5px] text-[#2a2a2a] ${UI}`}>
    <div className="h-[52px] bg-[#fbfbfb] border-b-2 border-[#dcdcdc] rounded-t-[4px] text-center font-bold text-[26.5px] leading-[46px] text-[#4a4a4a]">
      New Formatting Rule
    </div>
    <div className="px-[37px]">
      <div className="mt-[41px] h-[40px] flex items-center">
        <span className="w-[85px] mt-[3px] leading-none text-[#333]">Style:</span>
        <Select text="Classic" className="w-[299px]" />
      </div>
      <div className="mt-[30px] h-[2px] bg-[#dedede]" />
      <Select text="Format only unique or duplicate values" className="mt-[30px] w-[780px]" />
      <div className="mt-[16px] h-[40px] flex items-center">
        <Select text="duplicate" className="w-[374px]" />
        <span className="ml-[17px] mt-[3px] leading-none text-[#333]">values in the selected range</span>
      </div>
      <div className="mt-[20px] h-[46px] flex items-center">
        <span className="w-[168px] mt-[3px] leading-none text-[#333] whitespace-nowrap">Format with:</span>
        <Select text="Light Red Fill with Dark Red T..." className="w-[429px]" />
        <div className="ml-[17px] w-[316px] h-[46px] bg-[#f6c8cf] text-[#9c1c1c] text-[23.5px] flex items-center justify-center">AaBbCcYyZz</div>
      </div>
      <div className="mt-[41px] flex justify-end gap-[25px]">
        <div className="w-[124px] h-[40px] bg-white rounded-[8px] shadow-[0_1px_3px_rgba(0,0,0,0.3)] flex items-center justify-center">Cancel</div>
        <div className="w-[123px] h-[40px] rounded-[8px] bg-gradient-to-b from-[#4c8a62] to-[#2f7148] text-white flex items-center justify-center">OK</div>
      </div>
    </div>
  </div>
);

const TabBar = () => (
  <div className="h-[52px] bg-[#f0f0f0] border-t-2 border-b-2 border-[#cacaca] flex items-start">
    <div className="ml-[22px] mt-[15px] w-0 h-0 border-y-[10px] border-y-transparent border-r-[15px] border-r-[#bdbdbd]" />
    <div className="ml-[32px] mt-[15px] w-0 h-0 border-y-[10px] border-y-transparent border-l-[15px] border-l-[#bdbdbd]" />
    <div className="ml-[31px] -mt-[2px] w-[156px] h-[47px] bg-white rounded-b-[6px] shadow-[0_1px_2px_rgba(0,0,0,0.4)] flex items-center justify-center pt-[3px] text-[23.5px] font-bold text-[#3c7f52]">
      Sheet1
    </div>
    <svg width="22" height="22" viewBox="0 0 22 22" className="ml-[29px] mt-[14px] shrink-0">
      <path d="M11 0v22M0 11h22" stroke="#5a5a5a" strokeWidth="3.500" />
    </svg>
    <div className="ml-[26px] w-[2px] h-[41px] bg-[#d8d8d8]" />
  </div>
);

const StatusBar = () => (
  <div className="h-[54px] bg-[#f5f5f5] flex items-center text-[24px] text-[#666]">
    <span className="ml-[42px] mt-[3px] w-[111px]">Ready</span>
    <svg width="32" height="32" viewBox="0 0 32 32" className="shrink-0">
      <circle cx="16" cy="16" r="14.500" fill="none" stroke="#6a6a6a" strokeWidth="2" />
      <circle cx="16" cy="16" r="9.500" fill="#666" />
    </svg>
    <svg width="30" height="34" viewBox="0 0 30 34" className="ml-[42px] shrink-0">
      <circle cx="13" cy="4" r="3" fill="none" stroke="#666" strokeWidth="1.800" />
      <path d="M1 6c3 4 7 5 12 5s9-1 12-5M9 12v7l-4 12M17 12v8" fill="none" stroke="#666" strokeWidth="1.800" />
      <circle cx="21" cy="25" r="9" fill="#666" />
      <path d="m16.500 25 3 3 5.500-6" fill="none" stroke="#fff" strokeWidth="1.800" />
    </svg>
    <span className="ml-[13px] mt-[3px]">Accessibility: Good to go</span>
    <span className="ml-auto mt-[3px] mr-[27px]">Count: 15</span>
    <div className="w-[62px] h-[44px] bg-[#b8b8b8] rounded-[4px] flex items-center justify-center">
      <svg width="30" height="28" viewBox="0 0 30 28">
        <path d="M3 0h24a3 3 0 0 1 3 3v22a3 3 0 0 1-3 3H3a3 3 0 0 1-3-3V3a3 3 0 0 1 3-3z" fill="#444" />
        <path d="M10 0v28M20 0v28M0 9h30M0 19h30" stroke="#b8b8b8" strokeWidth="2" />
      </svg>
    </div>
    <svg width="26" height="32" viewBox="0 0 26 32" className="ml-[30px] shrink-0">
      <path d="M4 1h11l10 10v18a2 2 0 0 1-2 2H4a2 2 0 0 1-3-2V3a2 2 0 0 1 3-2zM15 1v10h10" fill="none" stroke="#666" strokeWidth="1.800" />
      <rect x="6" y="16" width="14" height="11" fill="none" stroke="#666" strokeWidth="1.800" />
      <path d="M13 16v11M6 21h14" stroke="#666" strokeWidth="1.800" />
    </svg>
    <svg width="28" height="32" viewBox="0 0 28 32" className="ml-[44px] shrink-0">
      <path d="M3 0v10h22V0M3 32V22h22v10" fill="none" stroke="#666" strokeWidth="1.800" />
      <path d="M0 16h28" stroke="#666" strokeWidth="2" strokeDasharray="2.500 2" />
    </svg>
    <div className="ml-[36px] w-[16px] h-[2px] bg-[#666]" />
    <div className="ml-[14px] w-[200px] h-[8px] rounded-full bg-[#ababab] relative">
      <div className="absolute left-[97px] top-[1px] w-[6px] h-[6px] rounded-full bg-white" />
      <div className="absolute left-[143px] -top-[13px] w-[33px] h-[33px] rounded-full bg-white shadow-[0_1px_3px_rgba(0,0,0,0.35)]" />
    </div>
    <svg width="18" height="18" viewBox="0 0 18 18" className="ml-[12px] shrink-0">
      <path d="M9 0v18M0 9h18" stroke="#666" strokeWidth="2" />
    </svg>
    <span className="ml-[37px] mt-[3px] w-[64px] whitespace-nowrap">310%</span>
    <div className="w-[46px]" />
  </div>
);

export default function App() {
  return (
    <div className={`relative w-[2754px] h-[1666px] overflow-hidden bg-white ${UI}`}>
      <TitleBar />
      <Ribbon />
      <FormulaBar />
      <Sheet />
      <TabBar />
      <StatusBar />
      <Dialog />
    </div>
  );
}
